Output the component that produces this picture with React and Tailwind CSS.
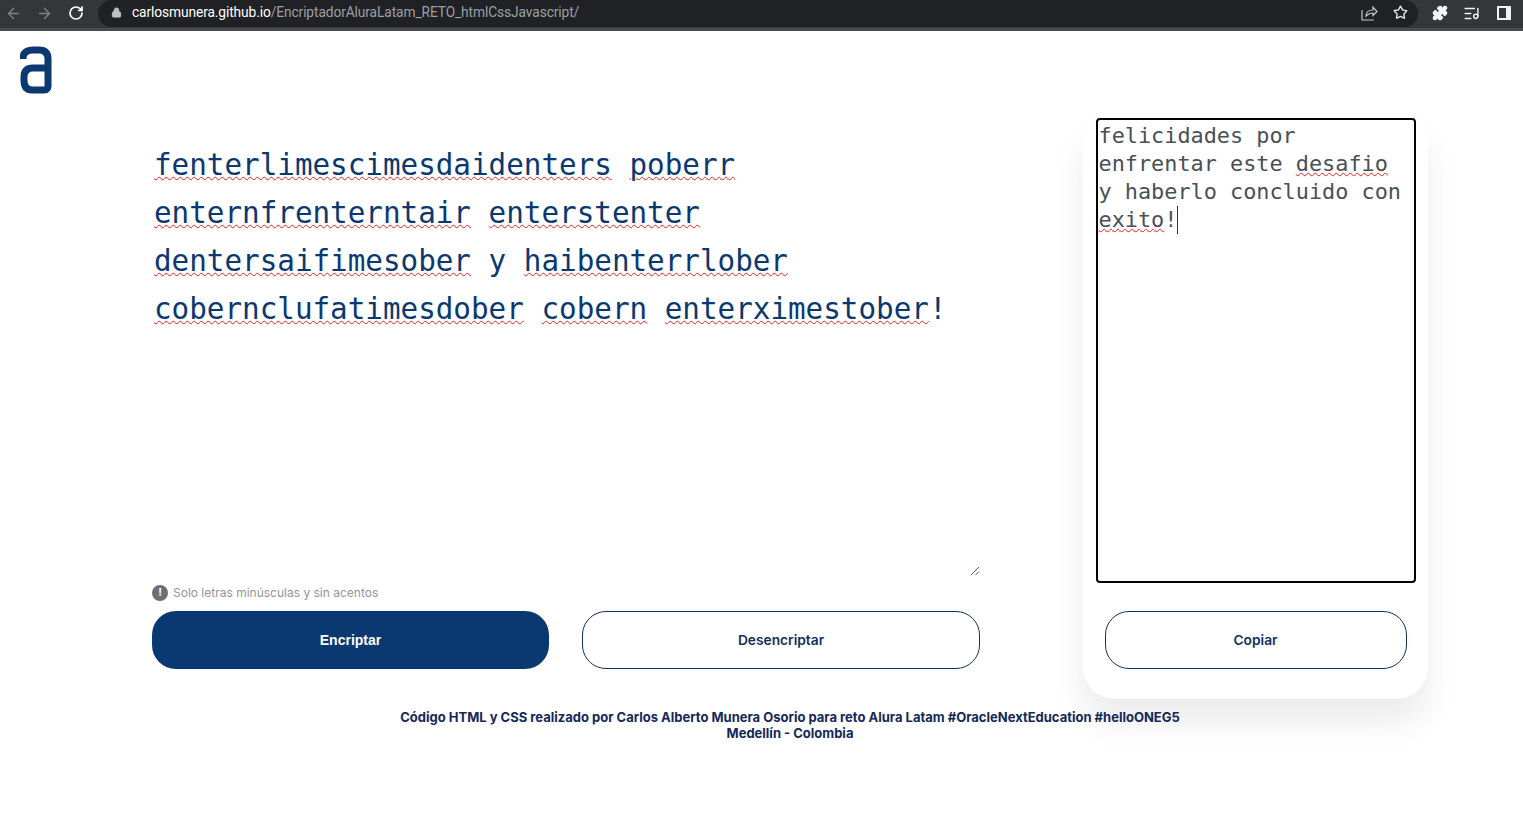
import React from 'react';
import { ArrowLeft, ArrowRight, RotateCw, Lock, Star, Puzzle, ListMusic } from 'lucide-react';

const Wavy = ({ children }) => (
  <span className="underline decoration-wavy decoration-[#ee1c1c] decoration-1 underline-offset-[1px]">{children}</span>
);

const BrowserBar = () => (
  <div className="h-[31px] bg-[#35363a] border-b-[3px] border-[#4a4b4e] flex items-start text-[#e8eaed]">
    <div className="w-[98px] h-[26px] flex items-center pl-[5px] gap-[14px]">
      <ArrowLeft size={17} className="text-[#7d7f82]" />
      <ArrowRight size={17} className="text-[#7d7f82]" />
      <RotateCw size={16} strokeWidth={2.6} className="text-white ml-[1px]" />
    </div>
    <div className="w-[1320px] h-[27px] bg-[#202124] rounded-[14px] flex items-center pl-[13px] pr-[10px]">
      <Lock size={11} fill="#bdc1c6" className="text-[#bdc1c6] -mt-[2px]" />
      <span className="ml-[10px] -mt-[3px] text-[13.75px] font-['Roboto',sans-serif] tracking-[-0.1px] text-white">
        carlosmunera.github.io<span className="text-[#9aa0a6]">/EncriptadorAluraLatam_RETO_htmlCssJavascript/</span>
      </span>
      <div className="ml-auto flex items-center gap-[15px] -mt-[2px]">
        <svg width="17" height="16" viewBox="0 0 17 16" fill="none" stroke="#c4c7c5" strokeWidth="1.2">
          <path d="M1 5v10h12" />
          <path d="M5 11c0-4 3-6 7-6V2l4 4.500-4 4V8c-3 0-5 1-7 3z" />
        </svg>
        <Star size={15} className="text-[#e8eaed]" strokeWidth={2.2} />
      </div>
    </div>
    <div className="flex-1 h-[26px] flex items-center pl-[14px] gap-[15px]">
      <Puzzle size={16} fill="#f1f3f4" className="text-[#f1f3f4]" />
      <ListMusic size={17} className="text-[#f1f3f4]" />
      <svg width="14" height="14" viewBox="0 0 14 14" className="ml-[2px]">
        <path d="M0 0h14v14H0z" fill="#f1f3f4" />
        <path d="M2 2h7v10H2z" fill="#35363a" />
      </svg>
    </div>
  </div>
);

const Logo = () => (
  <svg width="32" height="48" viewBox="0 0 32 48" fill="none">
    <path
      d="M3 13V12C3 7 7 4 13 4h6c6 0 9 3 9 9v27c0 2-1 4-4 4H12C6 44 4 40 4 34v-3c0-6 3-9 9-9h15"
      stroke="#0a3871"
      strokeWidth="7"
      strokeLinejoin="round"
    />
  </svg>
);

export default function App() {
  return (
    <div className="min-h-[814px] bg-white font-['Inter',sans-serif] overflow-hidden">
      <BrowserBar />
      <div className="h-[79px] pl-[20px] pt-[15px]">
        <Logo />
      </div>

      <div className="flex items-start pl-[152px]">
        <div className="w-[828px] pt-[6px]">
          <div className="relative h-[460px] pl-[2px] pt-[25px] font-['DejaVu_Sans_Mono',monospace] text-[29.25px] leading-[48px] text-[#0a3871]">
            <div><Wavy>fenterlimescimesdaidenters</Wavy> <Wavy>poberr</Wavy></div>
            <div><Wavy>enternfrenterntair</Wavy> <Wavy>enterstenter</Wavy></div>
            <div><Wavy>dentersaifimesober</Wavy> y <Wavy>haibenterrlober</Wavy></div>
            <div><Wavy>cobernclufatimesdober</Wavy> <Wavy>cobern</Wavy> <Wavy>enterximestober</Wavy>!</div>
            <svg className="absolute right-0 bottom-0" width="10" height="10" viewBox="0 0 10 10">
              <path d="M1 9 9 1M5.500 9 9 5.500" stroke="#555" strokeWidth="1" />
            </svg>
          </div>

          <div className="h-[35px] pb-[2px] flex items-center gap-[5px] text-[12px] text-[#93959b]">
            <span className="w-[16px] h-[16px] rounded-full bg-[#6d6f76] text-white text-[11px] font-bold flex items-center justify-center">!</span>
            Solo letras minúsculas y sin acentos
          </div>

          <div className="flex justify-between">
            <button className="w-[397px] h-[58px] rounded-[24px] bg-[#0a3871] text-white text-[14px] font-bold font-['Liberation_Sans',sans-serif]">
              Encriptar
            </button>
            <button className="w-[398px] h-[58px] rounded-[24px] border border-[#14305f] text-[#14305f] text-[13.75px] font-semibold">
              Desencriptar
            </button>
          </div>
        </div>

        <div className="ml-[103px] w-[345px] h-[589px] rounded-[32px] bg-white shadow-[0_24px_32px_rgba(0,0,0,0.08)] pt-[8px] flex flex-col items-center">
          <div className="w-[320px] h-[465px] border-2 border-black rounded-[4px] px-[1px] pt-[2px] font-['DejaVu_Sans_Mono',monospace] text-[21.85px] leading-[28px] text-[#495057]">
            <div>felicidades por</div>
            <div>enfrentar este <Wavy>desafio</Wavy></div>
            <div>y haberlo concluido con</div>
            <div className="flex items-center">
              <span><Wavy>exito</Wavy>!</span>
              <span className="w-px h-[28px] bg-[#333]" />
            </div>
          </div>
          <button className="mt-[28px] w-[302px] h-[58px] rounded-[24px] border border-[#14305f] text-[#14305f] text-[13.75px] font-semibold">
            Copiar
          </button>
        </div>
      </div>

      <div className="mt-[10px] pl-[57px] text-center text-[13px] leading-[16px] font-bold text-[#14285a]">
        <p>Código HTML y CSS realizado por Carlos Alberto Munera Osorio para reto Alura Latam #OracleNextEducation #helloONEG5</p>
        <p>Medellín - Colombia</p>
      </div>
    </div>
  );
}
